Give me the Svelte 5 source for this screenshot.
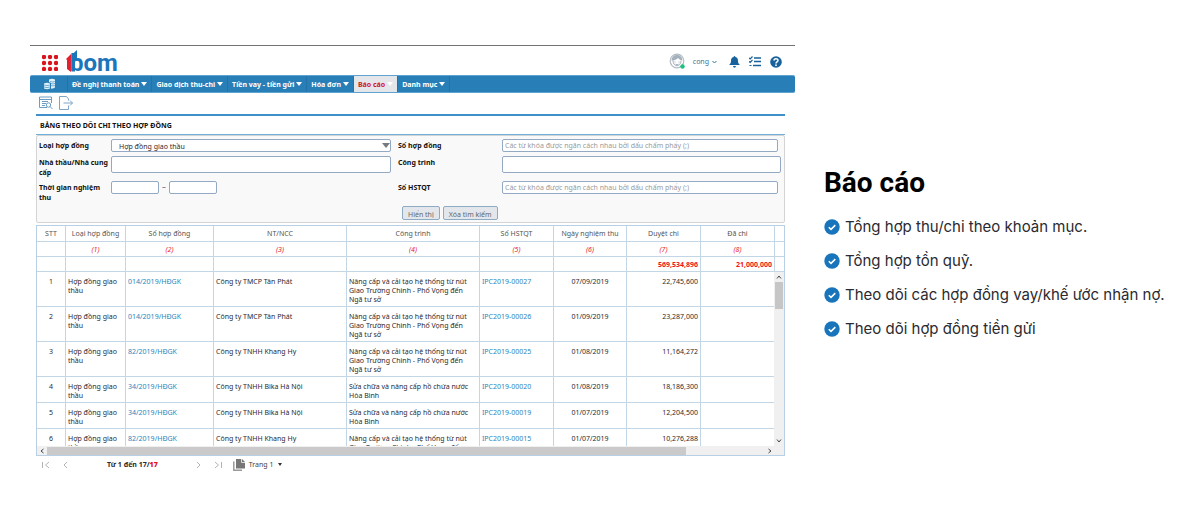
<script lang="ts">
  interface Row {
    type: string
    contract: string
    partner: string
    project: string
    ipc: string
    date: string
    approved: string
  }

  const menu = ['Đề nghị thanh toán', 'Giao dịch thu-chi', 'Tiền vay - tiền gửi', 'Hóa đơn', 'Báo cáo', 'Danh mục']
  const active = 'Báo cáo'

  const columns = [
    { label: 'STT', width: 29 },
    { label: 'Loại hợp đồng', width: 60 },
    { label: 'Số hợp đồng', width: 88 },
    { label: 'NT/NCC', width: 133 },
    { label: 'Công trình', width: 133 },
    { label: 'Số HSTQT', width: 74 },
    { label: 'Ngày nghiệm thu', width: 73 },
    { label: 'Duyệt chi', width: 74 },
    { label: 'Đã chi', width: 74 }
  ]

  const road = 'Nâng cấp và cải tạo hệ thống từ nút Giao Trường Chinh - Phố Vọng đến Ngã tư sở'
  const lake = 'Sửa chữa và nâng cấp hồ chứa nước Hòa Bình'
  const type = 'Hợp đồng giao thầu'

  const rows: Row[] = [
    { type, contract: '014/2019/HĐGK', partner: 'Công ty TMCP Tân Phát', project: road, ipc: 'IPC2019-00027', date: '07/09/2019', approved: '22,745,600' },
    { type, contract: '014/2019/HĐGK', partner: 'Công ty TMCP Tân Phát', project: road, ipc: 'IPC2019-00026', date: '01/09/2019', approved: '23,287,000' },
    { type, contract: '82/2019/HĐGK', partner: 'Công ty TNHH Khang Hy', project: road, ipc: 'IPC2019-00025', date: '01/08/2019', approved: '11,164,272' },
    { type, contract: '34/2019/HĐGK', partner: 'Công ty TNHH Bika Hà Nội', project: lake, ipc: 'IPC2019-00020', date: '01/08/2019', approved: '18,186,300' },
    { type, contract: '34/2019/HĐGK', partner: 'Công ty TNHH Bika Hà Nội', project: lake, ipc: 'IPC2019-00019', date: '01/07/2019', approved: '12,204,500' },
    { type, contract: '82/2019/HĐGK', partner: 'Công ty TNHH Khang Hy', project: road, ipc: 'IPC2019-00015', date: '01/07/2019', approved: '10,276,288' }
  ]

  const keywordHint = 'Các từ khóa được ngăn cách nhau bởi dấu chấm phẩy (;)'

  const features = [
    'Tổng hợp thu/chi theo khoản mục.',
    'Tổng hợp tồn quỹ.',
    'Theo dõi các hợp đồng vay/khế ước nhận nợ.',
    'Theo dõi hợp đồng tiền gửi'
  ]
</script>

<main class="page">
  <section class="app">
    <header class="topbar">
      <svg class="grid-icon" width="16" height="16" viewBox="0 0 16 16" fill="#d8141c">
        {#each [2, 8, 14] as y}
          {#each [2, 8, 14] as x}
            <circle cx={x} cy={y} r="2.200" />
          {/each}
        {/each}
      </svg>
      <a class="logo" href="#home">
        <svg width="12" height="24" viewBox="0 0 12 24">
          <path d="M0 10 5 5v18L1 20V11z" fill="#e3202b" />
          <path d="M5.500 6 11 1v9L9 12v10.500H5.500z" fill="#1b75bb" />
        </svg>
        <span>bom</span>
      </a>
      <div class="tools">
        <svg class="avatar" width="17" height="17" viewBox="0 0 17 17">
          <circle cx="8" cy="8" r="6.800" fill="#fff" stroke="#b4bcc4" stroke-width="1.200" />
          <path d="M2.500 7.500C2.500 0 13.500 0 13.500 7.500 11 7.200 10 6 9 5 7 7 5 7.500 2.500 7.500z" fill="#a4b0bb" />
          <path d="M4 7.500c0 7 8 7 8 0M5.500 9h1M9.500 9h1M6.500 11.200q1.500 1 3 0" fill="none" stroke="#8f9da9" stroke-width=".8" />
          <circle cx="13.500" cy="13.500" r="2.200" fill="#19c37d" />
        </svg>
        <button class="user" type="button">
          cong
          <svg width="5" height="4" viewBox="0 0 5 4"><path d="M.5 1 2.500 3 4.500 1" fill="none" stroke="#3f6f96" /></svg>
        </button>
        <svg width="11" height="12" viewBox="0 0 11 12" fill="#17629c">
          <path d="M5.500 0q.8 0 .8 1C8.500 1.400 9 3 9 5c0 2 .7 2.800 2 4H0c1.300-1.200 2-2 2-4 0-2 .5-3.600 2.700-4q0-1 .8-1zM4 10h3q-.3 1.700-1.500 1.700T4 10z" />
        </svg>
        <svg width="12" height="11" viewBox="0 0 12 11" fill="none" stroke="#17629c">
          <path d="M5 2h7M5 5.500h7M4 9.500h8" stroke-width="1.600" />
          <path d="M0 1.800 1.200 3 3.500.5M0 5.300l1.200 1.200L3.500 4M.5 9.500h2" stroke-width="1.200" />
        </svg>
        <svg width="12" height="12" viewBox="0 0 12 12">
          <circle cx="6" cy="6" r="5.800" fill="#17629c" />
          <path d="M4 4.600C4 2.200 8 2.200 8 4.500 8 6 6 5.800 6 7.400" fill="none" stroke="#fff" stroke-width="1.500" />
          <circle cx="6" cy="9.200" r=".9" fill="#fff" />
        </svg>
      </div>
    </header>

    <nav class="menu">
      <a class="menu-home" href="#money" aria-label="Tiền">
        <svg width="12" height="12" viewBox="0 0 12 12" fill="#e4f0f8">
          <path d="M5 1.500q3-1.500 6 0v8q-2 1.500-4 1V5L5 4z" />
          <path d="M0 5.500q3-1.500 6 0v5q-3 1.500-6 0z" />
          <path d="M0 7q3 1.200 6 0M0 9q3 1.200 6 0M6 3.500q3 1 5 0M7 5.500q2 .8 4 0M7 7.500q2 .8 4 0" fill="none" stroke="#287fb8" stroke-width=".6" />
        </svg>
      </a>
      {#each menu as item}
        <a class="menu-item" class:active={item === active} href="#menu">
          {item}
          <svg width="6" height="4" viewBox="0 0 6 4"><path d="M0 0h6L3 4z" fill="currentColor" /></svg>
        </a>
      {/each}
    </nav>

    <div class="content">
      <div class="actions">
        <svg width="14" height="14" viewBox="0 0 14 14" fill="none" stroke="#6d9dc5">
          <path d="M12.500 7V1H.5v10.500H8M.5 3.500h12M3 5.500h6M3 7.500h4M3 9.500h3" />
          <circle cx="9.500" cy="9" r="2.200" />
          <path d="m11 10.500 2.500 2.500" />
        </svg>
        <svg width="14" height="14" viewBox="0 0 14 14" fill="none" stroke="#7fa5c6">
          <path d="M9.500 4.500V3l-2-2.500h-7v13h9v-4M4.500 7h9M11 4.500 13.500 7 11 9.500" />
        </svg>
      </div>

      <h2 class="title">BẢNG THEO DÕI CHI THEO HỢP ĐỒNG</h2>

      <form class="filters">
        <label for="type">Loại hợp đồng</label>
        <div class="select">
          <select id="type"><option>Hợp đồng giao thầu</option></select>
          <svg width="8" height="5" viewBox="0 0 8 5"><path d="M0 0h8L4 5z" fill="#777b80" /></svg>
        </div>
        <label for="contract">Số hợp đồng</label>
        <input id="contract" class="keyword" placeholder={keywordHint} />

        <label for="partner">Nhà thầu/Nhà cung cấp</label>
        <input id="partner" class="tall" />
        <label for="project">Công trình</label>
        <input id="project" class="tall" />

        <label for="from">Thời gian nghiệm thu</label>
        <div class="range">
          <input id="from" />
          <span>~</span>
          <input aria-label="Đến ngày" />
        </div>
        <label for="ipc">Số HSTQT</label>
        <input id="ipc" class="keyword" placeholder={keywordHint} />

        <div class="buttons">
          <button type="button">Hiển thị</button>
          <button type="button">Xóa tìm kiếm</button>
        </div>
      </form>

      <div class="grid">
        <div class="viewport">
          <table>
            <colgroup>
              {#each columns as col}
                <col style="width: {col.width}px" />
              {/each}
              <col class="gutter" />
            </colgroup>
            <thead>
              <tr>
                {#each columns as col}
                  <th>{col.label}</th>
                {/each}
                <th></th>
              </tr>
              <tr class="index">
                {#each columns as col, i}
                  <td>{i > 0 ? `(${i})` : ''}</td>
                {/each}
                <td></td>
              </tr>
              <tr class="total">
                <td></td><td></td><td></td><td></td><td></td><td></td><td></td>
                <td>569,534,896</td>
                <td>21,000,000</td>
                <td></td>
              </tr>
            </thead>
            <tbody>
              {#each rows as row, i}
                <tr>
                  <td class="center">{i + 1}</td>
                  <td>{row.type}</td>
                  <td><a href="#contract">{row.contract}</a></td>
                  <td>{row.partner}</td>
                  <td>{row.project}</td>
                  <td><a href="#ipc">{row.ipc}</a></td>
                  <td class="center">{row.date}</td>
                  <td class="right">{row.approved}</td>
                  <td></td>
                  <td></td>
                </tr>
              {/each}
            </tbody>
          </table>
          <div class="vscroll">
            <svg width="6" height="4" viewBox="0 0 6 4"><path d="M1 3.500 3 1l2 2.500" fill="none" stroke="#444" /></svg>
            <div class="vthumb"></div>
            <svg width="6" height="4" viewBox="0 0 6 4"><path d="M1 .5 3 3 5 .5" fill="none" stroke="#444" /></svg>
          </div>
        </div>
        <div class="hscroll">
          <svg width="4" height="6" viewBox="0 0 4 6"><path d="M3.500 1 1 3l2.500 2" fill="none" stroke="#444" /></svg>
          <div class="htrack"><div class="hthumb"></div></div>
          <svg width="4" height="6" viewBox="0 0 4 6"><path d="M.5 1 3 3 .5 5" fill="none" stroke="#444" /></svg>
        </div>
      </div>

      <footer class="pager">
        <button type="button" aria-label="Trang đầu">
          <svg width="8" height="8" viewBox="0 0 8 8"><path d="M.5 1v6M7 1 3.500 4 7 7" /></svg>
        </button>
        <button type="button" aria-label="Trang trước">
          <svg width="8" height="8" viewBox="0 0 8 8"><path d="M5 1 2 4l3 3" /></svg>
        </button>
        <span class="count">Từ 1 đến 17/<b>17</b></span>
        <button type="button" aria-label="Trang sau">
          <svg width="8" height="8" viewBox="0 0 8 8"><path d="m3 1 3 3-3 3" /></svg>
        </button>
        <button type="button" aria-label="Trang cuối">
          <svg width="8" height="8" viewBox="0 0 8 8"><path d="m1 1 3.500 3L1 7M7.500 1v6" /></svg>
        </button>
        <button class="page-pick" type="button">
          <svg width="12" height="12" viewBox="0 0 12 12">
            <path d="M3 0h6l3 3v6.500H3z" fill="#777" />
            <path d="M.8 2.500v8.700H9" fill="none" stroke="#999" stroke-width="1.500" />
            <path d="M8.500 0v3.500H12" fill="none" stroke="#ddd" />
          </svg>
          Trang 1
          <svg class="caret" width="4" height="3" viewBox="0 0 4 3"><path d="M0 0h4L2 3z" fill="#333" /></svg>
        </button>
      </footer>
    </div>
  </section>

  <section class="features">
    <h1>Báo cáo</h1>
    <ul>
      {#each features as feature}
        <li>
          <svg width="16" height="16" viewBox="0 0 16 16">
            <circle cx="8" cy="8" r="7.700" fill="#1875bc" />
            <path d="m4.800 8.200 2.200 2.200 4.300-4.300" fill="none" stroke="#fff" stroke-width="1.500" />
          </svg>
          {feature}
        </li>
      {/each}
    </ul>
  </section>
</main>

<style>
  :global(body) {
    margin: 0;
    background: #fff;
  }

  .page {
    display: grid;
    grid-template-columns: minmax(0, 765fr) minmax(0, 376fr);
    gap: 29px;
    padding: 45px 0 0 30px;
    font-family: 'Noto Sans', 'Open Sans', sans-serif;
    font-size: 7px;
    line-height: 9px;
    color: #2a2a30;
  }

  .page * {
    box-sizing: border-box;
  }

  button,
  input,
  select {
    font: inherit;
    color: inherit;
    margin: 0;
  }

  a {
    text-decoration: none;
  }

  svg {
    display: block;
    flex: none;
  }

  .app {
    border-top: 1px solid #757075;
  }

  .topbar {
    display: flex;
    align-items: center;
    height: 29px;
    padding: 0 13px 0 12px;
  }

  .grid-icon {
    margin-top: 5px;
  }

  .logo {
    display: flex;
    align-items: center;
    margin-left: 8px;
    font-family: Roboto, sans-serif;
    font-size: 24px;
    font-weight: 700;
    line-height: 24px;
    color: #1b75bb;
  }

  .logo span {
    margin: 5px 0 0 -8px;
  }

  .tools {
    display: flex;
    align-items: center;
    gap: 9px;
    margin-left: auto;
    padding-top: 2px;
  }

  .user {
    display: flex;
    align-items: center;
    gap: 3px;
    padding: 0;
    margin-right: 3px;
    margin-left: -2px;
    border: 0;
    background: none;
    color: #3f6f96;
  }

  .menu {
    display: flex;
    height: 18px;
    background: #287fb8;
    border-top: 1px solid #5fa3cf;
    border-bottom: 1px solid #5fa3cf;
    border-radius: 2px;
  }

  .menu-home {
    display: flex;
    align-items: center;
    width: 38px;
    padding-left: 14px;
    border-right: 1px solid #2373aa;
  }

  .menu-item {
    display: flex;
    align-items: center;
    gap: 2px;
    padding: 0 4px;
    border-right: 1px solid #2373aa;
    font-weight: 700;
    color: #fff;
  }

  .menu-item.active {
    background: #e4e6ea;
    color: #d0142c;
  }

  .menu-item.active svg {
    color: #fff;
  }

  .content {
    padding: 0 10px 0 6px;
  }

  .actions {
    display: flex;
    align-items: center;
    gap: 6px;
    height: 21px;
    padding: 0 3px 2px;
  }

  .title {
    margin: 0;
    padding: 5px 4px 4px;
    border-top: 2px solid #3f8fca;
    border-bottom: 1px solid #6fb0d8;
    font-size: 7px;
    font-weight: 700;
    line-height: 9px;
    color: #111;
  }

  .filters {
    display: grid;
    grid-template-columns: 72px minmax(0, 280fr) 111px minmax(0, 279fr);
    grid-template-rows: 17px 25px 25px 14px;
    align-items: start;
    margin-bottom: 2px;
    padding: 3px 3px 2px 2px;
    border: 1px solid #d2d4d6;
    border-radius: 2px;
    background: #f9f9fa;
  }

  .filters label {
    padding: 2px 0 0 7px;
    font-weight: 700;
    line-height: 10px;
    color: #111;
  }

  .filters label:nth-child(4n + 1) {
    padding-left: 0;
  }

  .filters input,
  .filters select {
    width: 100%;
    height: 13px;
    padding: 0 2px;
    border: 1px solid #93a9c4;
    border-radius: 2px;
    background: #fff;
    outline: 0;
  }

  .filters .tall {
    height: 17px;
  }

  .filters .keyword {
    width: calc(100% - 3px);
  }

  .filters input::placeholder {
    color: #9a9a9a;
  }

  .select {
    position: relative;
  }

  .filters select {
    display: block;
    appearance: none;
    padding: 2px 0 0 7px;
  }

  .select svg {
    position: absolute;
    top: 4px;
    right: 1px;
  }

  .range {
    display: flex;
    gap: 3px;
  }

  .range span {
    line-height: 13px;
  }

  .filters .range input {
    width: 48px;
  }

  .buttons {
    display: flex;
    gap: 3px;
    grid-column: 3 / -1;
    padding-left: 11px;
  }

  .buttons button {
    height: 14px;
    padding: 2px 5px 0;
    border: 1px solid #8eabc4;
    border-radius: 2px;
    background: #e3e7ec;
    color: #666;
  }

  .grid {
    border: 1px solid #b9d0e4;
  }

  .viewport {
    position: relative;
    height: 220px;
    overflow: hidden;
  }

  table {
    width: 100%;
    table-layout: fixed;
    border-collapse: separate;
    border-spacing: 0;
  }

  .gutter {
    width: 10px;
  }

  th,
  td {
    padding: 5px 2px 2px;
    border-right: 1px solid #c3d6e6;
    border-bottom: 1px solid #c3d6e6;
    font-weight: 400;
    text-align: left;
    vertical-align: top;
  }

  th:last-child,
  td:last-child {
    border-right: 0;
  }

  thead th,
  thead td {
    height: 15px;
    padding: 0 2px;
    text-align: center;
    vertical-align: middle;
    color: #555;
  }

  thead th {
    height: 16px;
  }

  thead .index td {
    font-style: italic;
    color: #e8202c;
  }

  thead .total td {
    font-weight: 700;
    text-align: right;
    color: #f0141e;
  }

  td a {
    color: #2a86bd;
  }

  .center {
    text-align: center;
  }

  .right {
    text-align: right;
  }

  .vscroll {
    position: absolute;
    top: 46px;
    right: 0;
    bottom: 0;
    display: flex;
    flex-direction: column;
    align-items: center;
    width: 10px;
    padding: 3px 0;
    background: #f0f0f0;
  }

  .vthumb {
    width: 8px;
    height: 27px;
    margin: 3px 0 auto;
    background: #c6c6c6;
  }

  .hscroll {
    display: flex;
    align-items: center;
    gap: 3px;
    height: 9px;
    padding: 0 12px 0 3px;
    background: #f0f0f0;
  }

  .htrack {
    flex: 1;
  }

  .hthumb {
    width: 89%;
    height: 8px;
    background: #cacaca;
  }

  .pager {
    display: flex;
    align-items: center;
    height: 17px;
    padding-left: 6px;
  }

  .pager button {
    display: flex;
    align-items: center;
    padding: 0;
    margin-right: 12px;
    border: 0;
    background: none;
  }

  .pager button:not(.page-pick) path {
    fill: none;
    stroke: #b4b4b4;
  }

  .count {
    margin: 0 36px 0 25px;
    font-weight: 700;
  }

  .count b {
    color: #e0141e;
  }

  .pager .page-pick {
    gap: 4px;
    margin-left: -1px;
    color: #444;
  }

  .features {
    padding-top: 120px;
  }

  h1 {
    margin: 0;
    font-family: Roboto, sans-serif;
    font-size: 28px;
    font-weight: 700;
    line-height: 36px;
    color: #000;
  }

  ul {
    display: grid;
    gap: 14px;
    margin: 16px 0 0;
    padding: 0;
    list-style: none;
    font-family: Inter, sans-serif;
    font-size: 15px;
    line-height: 20px;
  }

  li {
    display: flex;
    align-items: center;
    gap: 5px;
  }
</style>
